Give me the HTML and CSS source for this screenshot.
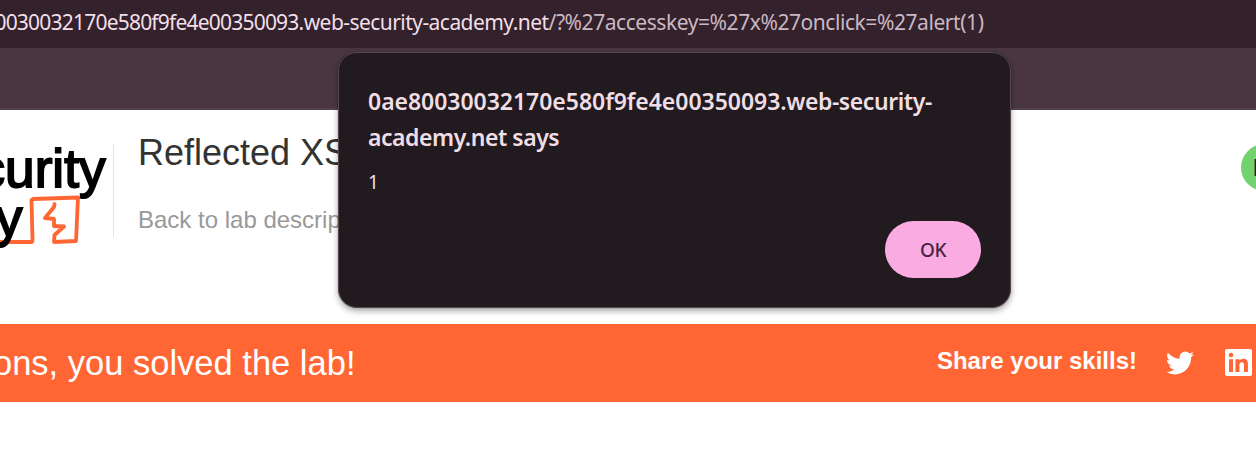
FILE: index.html
```html
<!DOCTYPE html>
<html lang="en">
<head>
<meta charset="utf-8">
<title>Lab solved</title>
<link rel="stylesheet" href="styles.css">
</head>
<body>
<div class="browser">
  <div class="address"><span class="host">0030032170e580f9fe4e00350093<span class="domain">.web-security-academy.net</span></span><span class="query">/?%27accesskey=%27x%27onclick=%27alert(1)</span></div>
  <div class="toolbar"></div>
  <header class="header">
    <svg class="logo" width="113" height="150" viewBox="0 0 113 150">
      <path class="logo-lines" d="M0 132 32 132 32.500 130 31.500 90 33 89 78 87.500 76 131 54 132 54.500 125 64 116.500 54 116 54 109 45 108 54 97 54.500 94"/>
      <g class="logo-text">
        <text x="105.500" y="76.500" text-anchor="end" textLength="127" lengthAdjust="spacingAndGlyphs">curity</text>
        <text x="22.500" y="125.500" text-anchor="end">y</text>
      </g>
    </svg>
    <div class="title">
      <h1>Reflected XSS</h1>
      <a class="back">Back to lab description</a>
    </div>
    <div class="status">L</div>
  </header>
  <section class="banner">
    <p class="congrats">ons, you solved the lab!</p>
    <div class="share">
      <span class="share-label">Share your skills!</span>
      <svg class="twitter" width="28" height="28" viewBox="0 0 24 24"><path fill="#fff" d="M23.95 4.57a10 10 0 0 1-2.82.77 4.96 4.96 0 0 0 2.16-2.72c-.95.55-2 .96-3.13 1.18a4.92 4.92 0 0 0-8.38 4.48C7.69 8.1 4.07 6.13 1.64 3.16a4.82 4.82 0 0 0-.67 2.48c0 1.71.87 3.21 2.19 4.1a4.9 4.9 0 0 1-2.23-.62v.06a4.92 4.92 0 0 0 3.95 4.83 5 5 0 0 1-2.21.08 4.94 4.94 0 0 0 4.6 3.42A9.87 9.87 0 0 1 0 19.54a13.99 13.99 0 0 0 7.55 2.21c9.05 0 14-7.5 14-13.98 0-.21 0-.42-.02-.63a9.94 9.94 0 0 0 2.46-2.55z"/></svg>
      <svg class="linkedin" width="27" height="27" viewBox="0 0 24 24"><path fill="#fff" fill-rule="evenodd" d="M1.5 0h21A1.5 1.5 0 0 1 24 1.500v21a1.500 1.500 0 0 1-1.500 1.500h-21A1.500 1.500 0 0 1 0 22.500v-21A1.500 1.500 0 0 1 1.500 0zM3.600 9v11.400h3.500V9zM5.350 3.300a2.050 2.050 0 1 0 0 4.100 2.050 2.050 0 0 0 0-4.100zM9.300 9v11.400h3.550v-5.650c0-1.500.3-2.950 2.150-2.950s1.850 1.700 1.850 3.050v5.550h3.550v-6.250c0-3.100-.65-5.450-4.250-5.450-1.700 0-2.850.95-3.400 1.850h-.05V9z"/></svg>
    </div>
  </section>
  <div class="dialog" role="alertdialog">
    <h2><span class="origin-id">0ae80030032170e580f9fe4e00350093</span><span class="origin-domain">.web-security-</span><br><span class="origin-end">academy.net says</span></h2>
    <p class="message">1</p>
    <button class="ok">OK</button>
  </div>
</div>
</body>
</html>
```
FILE: styles.css
```css
* { box-sizing: border-box; }
body { margin: 0; background: #fff; font-family: "Liberation Sans", Arial, sans-serif; }
h1, h2, p { margin: 0; font-weight: 400; }
.browser { position: relative; width: 1256px; height: 449px; overflow: hidden; }
.address {
  display: flex; justify-content: flex-end; align-items: center;
  height: 48px; padding: 0 272.500px 5px 0; background: #33212c;
  font: 21px/30px "Noto Sans", sans-serif; white-space: nowrap;
}
.host { color: #f2dfe8; letter-spacing: -0.79px; }
.domain { letter-spacing: -0.55px; }
.query { color: #cbb8c2; letter-spacing: -0.44px; }
.toolbar { height: 62px; background: #4a3641; border-bottom: 2px solid #524149; }
.header { display: flex; height: 214px; }
.logo { flex: none; }
.logo-text { font: 54px "Liberation Sans", sans-serif; fill: #000; stroke: #000; stroke-width: 1.9px; }
.logo-lines { fill: none; stroke: #ff6633; stroke-width: 3.8px; stroke-linejoin: round; stroke-linecap: round; }
.title {
  display: flex; flex: none; flex-direction: column; width: 600px; height: 93px;
  margin-top: 34px; padding-left: 24px; border-left: 1px solid #e2e2e2; white-space: nowrap;
}
.title h1 { margin-top: -12px; color: #333332; font-size: 36px; line-height: 42px; }
.back { margin-top: 31px; color: #999; font-size: 24px; line-height: 30px; }
.status {
  flex: none; width: 120px; height: 47px; margin: 34px 0 0 528px; padding-left: 12px;
  border-radius: 24px; background: #72d26d; color: #222; font-size: 24px; line-height: 48px; font-weight: 700;
}
.banner {
  display: flex; justify-content: space-between; height: 78px; padding-right: 4px;
  background: #ff6633; color: #fff; white-space: nowrap;
}
.congrats { margin-left: -7px; font-size: 34.500px; line-height: 78px; }
.share { display: flex; align-items: center; }
.share-label { margin-right: 29px; padding-bottom: 4px; font-size: 24px; font-weight: 700; }
.twitter { margin-right: 31px; }
.linkedin { margin-bottom: 2px; }
.dialog {
  position: absolute; left: 338px; top: 52px; width: 673px; height: 256px; padding: 30px 29px;
  display: flex; flex-direction: column; border: 1px solid #574850; border-radius: 19px;
  background: #211a1e; color: #f0dee6; font-family: "Noto Sans", sans-serif;
  box-shadow: 0 0 1px rgba(0,0,0,.5), 0 3px 6px rgba(0,0,0,.35);
}
.dialog h2 { font-size: 23px; line-height: 36px; font-weight: 600; white-space: nowrap; }
.origin-id { letter-spacing: -0.03px; }
.origin-domain { letter-spacing: -0.42px; }
.origin-end { letter-spacing: -0.46px; }
.message { margin-top: 13px; font-size: 19px; line-height: 28px; }
.ok {
  align-self: flex-end; width: 96px; height: 57px; margin-top: 25px; padding: 0;
  flex: none; border: 0; border-radius: 29px; background: #f9abe2; color: #472342;
  font: 500 19px "Noto Sans", sans-serif; letter-spacing: -0.5px;
}
```
